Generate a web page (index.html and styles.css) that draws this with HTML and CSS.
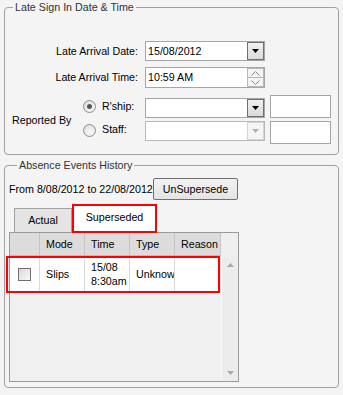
FILE: index.html
```html
<!DOCTYPE html>
<html lang="en">
<head>
  <meta charset="UTF-8" />
  <title>Late Sign In</title>
  <link rel="stylesheet" href="styles.css">
</head>
<body>
  <fieldset class="group group-late">
    <legend>Late Sign In Date &amp; Time</legend>
    <div class="late-grid">
      <label class="field-label row-date">Late Arrival Date:</label>
      <div class="combo row-date">
        <span class="combo-text">15/08/2012</span>
        <span class="drop-btn"><svg width="7" height="4" viewBox="0 0 7 4"><polygon points="0,0 7,0 3.5,4" fill="#000"/></svg></span>
      </div>

      <label class="field-label row-time">Late Arrival Time:</label>
      <div class="combo row-time">
        <span class="combo-text">10:59 AM</span>
        <span class="spinner">
          <span class="spin-half"><svg width="9" height="5" viewBox="0 0 9 5"><polyline points="0.5,4.5 4.5,0.5 8.5,4.5" fill="none" stroke="#8a8a8a"/></svg></span>
          <span class="spin-half"><svg width="9" height="5" viewBox="0 0 9 5"><polyline points="0.5,0.5 4.5,4.5 8.5,0.5" fill="none" stroke="#8a8a8a"/></svg></span>
        </span>
      </div>

      <span class="reported">Reported By</span>

      <span class="radio checked rship-radio"></span>
      <span class="radio-label rship-label">R'ship:</span>
      <div class="combo rship-select">
        <span class="combo-text"></span>
        <span class="drop-btn"><svg width="7" height="4" viewBox="0 0 7 4"><polygon points="0,0 7,0 3.5,4" fill="#000"/></svg></span>
      </div>
      <div class="textbox rship-text"></div>

      <span class="radio staff-radio"></span>
      <span class="radio-label staff-label">Staff:</span>
      <div class="combo disabled staff-select">
        <span class="combo-text"></span>
        <span class="drop-btn"><svg width="7" height="4" viewBox="0 0 7 4"><polygon points="0,0 7,0 3.5,4" fill="#b0b0b0"/></svg></span>
      </div>
      <div class="textbox staff-text"></div>
    </div>
  </fieldset>

  <fieldset class="group group-history">
    <legend>Absence Events History</legend>
    <div class="range-row">
      <span class="range-text">From 8/08/2012 to 22/08/2012</span>
      <button class="btn">UnSupersede</button>
    </div>

    <div class="tabs">
      <div class="tab">Actual</div>
      <div class="tab active">Superseded</div>
    </div>

    <div class="grid">
      <div class="grid-head">
        <div class="cell col-check"></div>
        <div class="cell col-mode">Mode</div>
        <div class="cell col-time">Time</div>
        <div class="cell col-type">Type</div>
        <div class="cell col-reason">Reason</div>
        <div class="head-filler"></div>
      </div>
      <div class="grid-body">
        <div class="rows">
          <div class="row hl">
            <div class="cell col-check"><span class="checkbox"></span></div>
            <div class="cell col-mode">Slips</div>
            <div class="cell col-time">15/08<br>8:30am</div>
            <div class="cell col-type">Unknown</div>
            <div class="cell col-reason"></div>
          </div>
        </div>
        <div class="vscroll">
          <svg width="7" height="4" viewBox="0 0 7 4"><polygon points="0,4 7,4 3.5,0" fill="#a8a8a8"/></svg>
          <svg width="7" height="4" viewBox="0 0 7 4"><polygon points="0,0 7,0 3.5,4" fill="#a8a8a8"/></svg>
        </div>
      </div>
    </div>
  </fieldset>
</body>
</html>
```

FILE: styles.css
```css
* { box-sizing: border-box; }

body {
  margin: 0;
  background: #f4f4f4;
  font-family: "Liberation Sans", Arial, sans-serif;
  font-size: 10.7px;
  color: #000;
}

.group {
  margin: 0 4px;
  padding: 0;
  border: 1px solid #a0a0a0;
  border-radius: 4px;
  min-width: 0;
}

.group legend {
  margin-left: 8px;
  padding: 0 2px;
  line-height: 14px;
  color: #333;
}

/* late sign in */
.group-late {
  padding: 27px 0 10px 0;
}

.late-grid {
  display: grid;
  grid-template-columns: 78px 13px 49px 120px 66px;
  grid-template-rows: 26px 28px 26px 23px;
}

.field-label {
  grid-column: 1 / 4;
  text-align: right;
  padding-right: 7px;
  white-space: nowrap;
}

.row-date { grid-row: 1; }
.row-time { grid-row: 2; }

.field-label.row-date { line-height: 20px; }
.field-label.row-time { line-height: 21px; }

.combo {
  grid-column: 4;
  display: flex;
  height: 20px;
  background: #fff;
  border: 1px solid #a5a5a5;
}

.combo.row-time { height: 21px; }

.combo-text {
  flex: 1;
  padding-left: 2px;
  line-height: 18px;
  white-space: nowrap;
}

.drop-btn {
  width: 17px;
  display: flex;
  align-items: center;
  justify-content: center;
  background: linear-gradient(#f0f0f0, #dadada);
  border: 1px solid #6f6f6f;
}

.combo.disabled { border-color: #b8b8b8; }

.combo.disabled .drop-btn {
  background: #f4f4f4;
  border-color: #d4d4d4;
}

.spinner {
  width: 17px;
  display: flex;
  flex-direction: column;
}

.spin-half {
  flex: 1;
  display: flex;
  align-items: center;
  justify-content: center;
  background: #f4f4f4;
  border: 1px solid #b8b8b8;
}

.spin-half + .spin-half { border-top: none; }

.reported {
  grid-column: 1;
  grid-row: 3 / 5;
  align-self: center;
  padding-left: 7px;
  white-space: nowrap;
}

.radio {
  grid-column: 2;
  position: relative;
  width: 13px;
  height: 13px;
  border: 1px solid #8e8f8f;
  border-radius: 50%;
  background: radial-gradient(circle at 60% 65%, #fafafa, #d8d8d8);
}

.radio.checked::after {
  content: "";
  position: absolute;
  left: 3px;
  top: 3px;
  width: 5px;
  height: 5px;
  border-radius: 50%;
  background: #555;
}

.rship-radio { grid-row: 3; margin-top: 5px; }
.staff-radio { grid-row: 4; margin-top: 3px; }

.radio-label {
  grid-column: 3;
  padding-left: 6px;
}

.rship-label { grid-row: 3; line-height: 23px; }
.staff-label { grid-row: 4; line-height: 17px; }

.rship-select { grid-row: 3; margin-top: 3px; }
.staff-select { grid-row: 4; }

.textbox {
  grid-column: 5;
  width: 61px;
  height: 23px;
  margin-left: 5px;
  background: #fff;
  border: 1px solid #a5a5a5;
}

.rship-text { grid-row: 3; }
.staff-text { grid-row: 4; }

/* history */
.group-history {
  margin-top: 3px;
  padding: 6px 0 5px 4px;
}

.range-row {
  display: flex;
  align-items: center;
  height: 22px;
}

.range-text {
  width: 144px;
  white-space: nowrap;
}

.btn {
  width: 85px;
  height: 22px;
  padding: 0;
  font: inherit;
  color: #000;
  background: linear-gradient(#f2f2f2, #e4e4e4);
  border: 1px solid #707070;
  border-radius: 2px;
}

.tabs {
  display: flex;
  align-items: flex-end;
  height: 28px;
  margin: 4px 0 0 5px;
}

.tab {
  width: 58px;
  height: 24px;
  line-height: 23px;
  text-align: center;
  background: #e4e4e4;
  border: 1px solid #a0a0a0;
  border-bottom: none;
}

.tab.active {
  position: relative;
  z-index: 1;
  width: 85px;
  height: 29px;
  margin-bottom: -1px;
  padding-top: 2px;
  line-height: 22px;
  background: #fff;
  border: none;
  outline: 2px solid #f00;
  outline-offset: -2px;
}

.grid {
  width: 230px;
  height: 150px;
  background: #f0f0f0;
  border: 1px solid #9a9a9a;
}

.grid-head {
  display: flex;
  height: 23px;
}

.grid-head .cell {
  background: #dcdcdc;
  border-bottom: 1px solid #bcbcbc;
  line-height: 22px;
}

.cell {
  padding-left: 6px;
  border-right: 1px solid #c4c4c4;
  white-space: nowrap;
  overflow: hidden;
}

.col-check { width: 30px; }
.col-mode { width: 45px; }
.col-time { width: 45px; }
.col-type { width: 45px; }
.col-reason { width: 46px; }

.head-filler {
  flex: 1;
  background: #efefef;
}

.grid-body {
  display: flex;
  height: 125px;
}

.rows { width: 211px; }

.row {
  position: relative;
  display: flex;
  height: 36px;
  background: #fff;
}

.row .cell {
  display: flex;
  align-items: center;
  line-height: 14px;
  border-right-color: #dadada;
}

.row.hl::after {
  content: "";
  position: absolute;
  left: -4px;
  top: 0;
  right: 1px;
  bottom: -1px;
  border: 2px solid #f00;
}

.row .col-check {
  justify-content: center;
  padding-left: 0;
}

.checkbox {
  width: 13px;
  height: 13px;
  border: 1px solid #707070;
  background: linear-gradient(135deg, #d8d8d8, #fafafa);
}

.vscroll {
  flex: 1;
  display: flex;
  flex-direction: column;
  align-items: center;
  justify-content: space-between;
  padding: 7px 0 6px;
  background: #ececec;
  border-left: 1px solid #f8f8f8;
}
```
